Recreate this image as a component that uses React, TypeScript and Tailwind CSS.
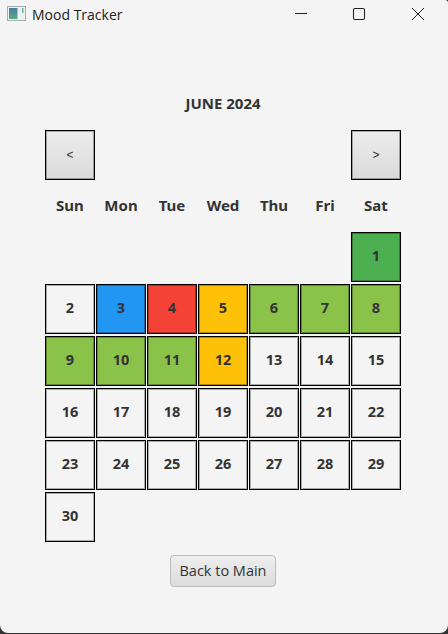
const cells: [number, string][] = [
  [1, "bg-[#4caf50]"],
  [2, ""],
  [3, "bg-[#2196f3]"],
  [4, "bg-[#f44336]"],
  [5, "bg-[#ffc107]"],
  [6, "bg-[#8bc34a]"],
  [7, "bg-[#8bc34a]"],
  [8, "bg-[#8bc34a]"],
  [9, "bg-[#8bc34a]"],
  [10, "bg-[#8bc34a]"],
  [11, "bg-[#8bc34a]"],
  [12, "bg-[#ffc107]"],
  ...Array.from({ length: 18 }, (_, i) => [i + 13, ""] as [number, string]),
];
const days = ["Sun", "Mon", "Tue", "Wed", "Thu", "Fri", "Sat"];

function NavButton({ label }: { label: string }) {
  return (
    <button className="w-[50px] h-[50px] border border-black bg-gradient-to-b from-[#ececec] to-[#dadada] shadow-[inset_0_0_0_1px_rgba(0,0,0,0.3)] flex items-center justify-center text-[12px] text-[#333333] font-['Liberation_Sans',sans-serif]">
      {label}
    </button>
  );
}

export default function App() {
  return (
    <div className="w-[448px] h-[634px] bg-[#333333]">
      <div className="w-[448px] h-[633px] bg-[#f4f4f4] flex flex-col font-['Noto_Sans',sans-serif] overflow-hidden rounded-b-[8px] rounded-tr-[3px]">
        <div className="h-[30px] flex items-center shrink-0">
          <svg width="20" height="16" viewBox="0 0 20 16" className="ml-[7px] mb-[2px] shrink-0">
            <defs>
              <linearGradient id="ic" x1="0" y1="0" x2="0" y2="1">
                <stop offset="0" stopColor="#4a7fa0" />
                <stop offset="1" stopColor="#56a88a" />
              </linearGradient>
            </defs>
            <rect x="0.5" y="0.5" width="18" height="14" fill="#eef1f2" stroke="#a8adb0" />
            <rect x="2" y="2" width="8.5" height="11" fill="url(#ic)" />
            <rect x="15" y="2" width="1.5" height="5" fill="#6fb09a" />
          </svg>
          <span className="ml-[5px] mb-[2px] text-[14px] text-[#222222] font-['Open_Sans',sans-serif]">Mood Tracker</span>
          <div className="ml-auto mb-[2px] flex items-center">
            <svg width="14" height="14" viewBox="0 0 14 14" className="mr-[44px]">
              <path d="M1 6.5H13" stroke="#222" strokeWidth="1" />
            </svg>
            <svg width="14" height="14" viewBox="0 0 14 14" className="mr-[45px]">
              <rect x="1.5" y="1.5" width="11" height="11" rx="1.5" fill="none" stroke="#222" strokeWidth="1.1" />
            </svg>
            <svg width="14" height="14" viewBox="0 0 14 14" className="mr-[23px]">
              <path d="M1 1L13 13M13 1L1 13" stroke="#222" strokeWidth="1" />
            </svg>
          </div>
        </div>

        <div className="h-[100px] shrink-0">
          <div className="mt-[63px] pr-[2px] text-center text-[15px] leading-[20px] font-bold text-[#333333]">JUNE 2024</div>
        </div>

        <div className="ml-[45px] w-[356px] flex justify-between shrink-0">
          <NavButton label="<" />
          <NavButton label=">" />
        </div>

        <div className="ml-[45px] mt-[15px] grid grid-cols-[repeat(7,50px)] gap-x-[1px] shrink-0">
          {days.map((d) => (
            <div key={d} className="text-center text-[15px] leading-[20px] font-bold text-[#333333]">{d}</div>
          ))}
        </div>

        <div className="ml-[45px] mt-[17px] grid grid-cols-[repeat(7,50px)] auto-rows-[50px] gap-x-[1px] gap-y-[2px] shrink-0">
          {cells.map(([n, bg]) => (
            <div
              key={n}
              className={`border border-black shadow-[inset_0_0_0_1px_rgba(0,0,0,0.3)] flex items-center justify-center pb-[2px] text-[14.5px] font-bold text-[#333333] ${bg} ${n === 1 ? "col-start-7" : ""}`}
            >
              {n}
            </div>
          ))}
        </div>

        <div className="mt-[13px] flex justify-center">
          <button className="w-[106px] h-[32px] ml-[-2px] rounded-[4px] border border-[#bdbdbd] bg-gradient-to-b from-[#eeeeee] to-[#dcdcdc] text-[14.5px] text-[#333333] font-['Open_Sans',sans-serif]">
            Back to Main
          </button>
        </div>
      </div>
    </div>
  );
}
